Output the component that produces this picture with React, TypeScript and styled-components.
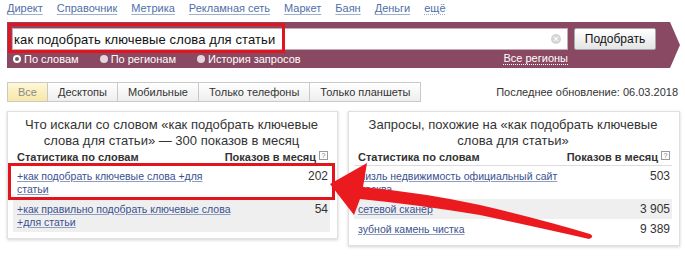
import React from 'react';
import styled, { createGlobalStyle } from 'styled-components';

const GlobalStyle = createGlobalStyle`
  html, body { margin: 0; padding: 0; background: #fff; }
  body { font-family: "Liberation Sans", Arial, sans-serif; color: #333; }
`;

const Page = styled.div`
  position: relative;
  width: 685px;
  height: 266px;
  overflow: hidden;
  padding: 0 7px 0 7px;
  box-sizing: border-box;
`;

const Nav = styled.nav`
  display: flex;
  gap: 14px;
  height: 16px;
  align-items: center;
  font-size: 11px;
`;

const NavLink = styled.a<{ $dotted?: boolean }>`
  color: #4f6fa8;
  text-decoration: underline;
  text-decoration-style: ${p => (p.$dotted ? 'dotted' : 'solid')};
  text-decoration-color: #9fb0cf;
  text-underline-offset: 2px;
`;

const Band = styled.div`
  margin-top: 6px;
  height: 46px;
  width: 673px;
  background: #8a4962;
  clip-path: polygon(0 0, calc(100% - 10px) 0, 100% 50%, calc(100% - 10px) 100%, 0 100%);
  padding: 6px 0 0 5px;
  box-sizing: border-box;
  display: grid;
  grid-template-columns: 556px 82px;
  grid-template-rows: 22px 18px;
  column-gap: 6px;
`;

const SearchField = styled.div`
  background: #fff;
  border: 1px solid #c8aab6;
  box-sizing: border-box;
  display: flex;
  align-items: center;
  justify-content: space-between;
  padding: 0 6px 0 1px;
  font-size: 13px;
  letter-spacing: 0.1px;
  color: #111;
`;

const ClearIcon = styled.span`
  width: 10px;
  height: 10px;
  border-radius: 50%;
  background: #d4d4d4;
  color: #fff;
  font-size: 9px;
  line-height: 10px;
  text-align: center;
  font-weight: bold;
`;

const SubmitButton = styled.button`
  font-family: inherit;
  font-size: 12px;
  color: #111;
  border: 1px solid #a9a9a9;
  border-radius: 2px;
  background: linear-gradient(#ffffff, #e4e4e4);
  padding: 0;
  height: 22px;
`;

const OptionsRow = styled.div`
  display: flex;
  align-items: center;
  justify-content: space-between;
  font-size: 11px;
  color: #fff;
`;

const RadioGroup = styled.div`
  display: flex;
  gap: 21px;
  padding-left: 1px;
`;

const RadioItem = styled.label`
  display: flex;
  align-items: center;
  gap: 3px;
`;

const RadioDot = styled.span<{ $checked?: boolean }>`
  width: 8px;
  height: 8px;
  border-radius: 50%;
  box-sizing: border-box;
  background: ${p => (p.$checked ? '#6c5a62' : '#e3d6dc')};
  border: ${p => (p.$checked ? '2px solid #fff' : 'none')};
`;

const RegionsLink = styled.span`
  color: #fff;
  border-bottom: 1px dotted #fff;
  line-height: 11px;
`;

const TabsRow = styled.div`
  margin-top: 14px;
  display: flex;
  align-items: center;
  justify-content: space-between;
  height: 20px;
`;

const Tabs = styled.div`
  display: flex;
`;

const Tab = styled.div<{ $active?: boolean }>`
  height: 20px;
  box-sizing: border-box;
  border: 1px solid #c9c9c9;
  margin-left: -1px;
  &:first-child { margin-left: 0; }
  padding: 0 10px;
  display: flex;
  align-items: center;
  font-size: 11px;
  color: ${p => (p.$active ? '#8a8a8a' : '#333')};
  background: ${p => (p.$active ? 'linear-gradient(#fff7d6, #f7e7a8)' : 'linear-gradient(#ffffff, #eeeeee)')};
`;

const Updated = styled.div`
  font-size: 11px;
  color: #333;
`;

const Panels = styled.div`
  margin-top: 9px;
  display: grid;
  grid-template-columns: 331px 332px;
  column-gap: 10px;
  align-items: start;
`;

const Panel = styled.section`
  border: 1px solid #e0e0e0;
  box-shadow: 0 1px 3px rgba(0, 0, 0, 0.18);
  padding: 5px 7px 6px 5px;
  background: #fff;
`;

const PanelTitle = styled.div`
  font-size: 13px;
  line-height: 16px;
  text-align: center;
  color: #333;
  margin-bottom: 2px;
`;

const HeadRow = styled.div`
  display: grid;
  grid-template-columns: 1fr auto;
  font-size: 11px;
  font-weight: bold;
  line-height: 13px;
  padding: 0 2px 1px 4px;
  border-bottom: 1px solid #dcdcdc;
`;

const Hint = styled.span`
  display: inline-block;
  width: 7px;
  height: 7px;
  border: 1px solid #9a9a9a;
  font-size: 7px;
  line-height: 7px;
  text-align: center;
  font-weight: normal;
  color: #777;
  margin-left: 3px;
  vertical-align: 3px;
`;

const Row = styled.div<{ $shaded?: boolean }>`
  display: grid;
  grid-template-columns: 1fr auto;
  column-gap: 20px;
  padding: 4px 2px 3px 4px;
  line-height: 13px;
  background: ${p => (p.$shaded ? '#efefef' : 'transparent')};
`;

const Phrase = styled.a`
  font-size: 10.5px;
  color: #3a5190;
  text-decoration: underline;
  text-decoration-color: #8f9dc0;
  text-underline-offset: 1px;
  max-width: 217px;
`;

const Count = styled.span`
  font-size: 12px;
  color: #333;
  text-align: right;
`;

const Annotations = styled.svg`
  position: absolute;
  top: 0;
  left: 0;
  pointer-events: none;
`;

const navItems = ['Директ', 'Справочник', 'Метрика', 'Рекламная сеть', 'Маркет', 'Баян', 'Деньги'];
const tabs = ['Все', 'Десктопы', 'Мобильные', 'Только телефоны', 'Только планшеты'];

const leftRows = [
  { text: '+как подобрать ключевые слова +для статьи', count: '202' },
  { text: '+как правильно подобрать ключевые слова +для статьи', count: '54' },
];

const rightRows = [
  { text: 'мизль недвижимость официальный сайт москва', count: '503' },
  { text: 'сетевой сканер', count: '3 905' },
  { text: 'зубной камень чистка', count: '9 389' },
];

const StatsTable = ({ rows }: { rows: { text: string; count: string }[] }) => (
  <>
    <HeadRow>
      <span>Статистика по словам</span>
      <span>Показов в месяц<Hint>?</Hint></span>
    </HeadRow>
    {rows.map((r, i) => (
      <Row key={i} $shaded={i % 2 === 1}>
        <Phrase href="#">{r.text}</Phrase>
        <Count>{r.count}</Count>
      </Row>
    ))}
  </>
);

export default function App() {
  return (
    <Page>
      <GlobalStyle />
      <Nav>
        {navItems.map(n => <NavLink key={n} href="#">{n}</NavLink>)}
        <NavLink href="#" $dotted>ещё</NavLink>
      </Nav>

      <Band>
        <SearchField>
          <span>как подобрать ключевые слова для статьи</span>
          <ClearIcon>×</ClearIcon>
        </SearchField>
        <SubmitButton>Подобрать</SubmitButton>
        <OptionsRow>
          <RadioGroup>
            <RadioItem><RadioDot $checked />По словам</RadioItem>
            <RadioItem><RadioDot />По регионам</RadioItem>
            <RadioItem><RadioDot />История запросов</RadioItem>
          </RadioGroup>
          <RegionsLink>Все регионы</RegionsLink>
        </OptionsRow>
      </Band>

      <TabsRow>
        <Tabs>
          {tabs.map((t, i) => <Tab key={t} $active={i === 0}>{t}</Tab>)}
        </Tabs>
        <Updated>Последнее обновление: 06.03.2018</Updated>
      </TabsRow>

      <Panels>
        <Panel>
          <PanelTitle>Что искали со словом «как подобрать ключевые слова для статьи» — 300 показов в месяц</PanelTitle>
          <StatsTable rows={leftRows} />
        </Panel>
        <Panel>
          <PanelTitle>Запросы, похожие на «как подобрать ключевые<br />слова для статьи»</PanelTitle>
          <StatsTable rows={rightRows} />
        </Panel>
      </Panels>

      <Annotations width="685" height="266" viewBox="0 0 685 266">
        <rect x="9.5" y="24.5" width="274" height="27" fill="none" stroke="#e3141c" strokeWidth="3" />
        <rect x="9.5" y="164.5" width="324" height="34" fill="none" stroke="#e3141c" strokeWidth="3" />
        <path
          d="M330 184 L367 163 L363 187 Q425 193 480 205 Q540 219 590 234 Q595 237 589 239 Q540 228 480 215 Q420 205 360 199 L354 215 Z"
          fill="#ea1a1f"
        />
      </Annotations>
    </Page>
  );
}
